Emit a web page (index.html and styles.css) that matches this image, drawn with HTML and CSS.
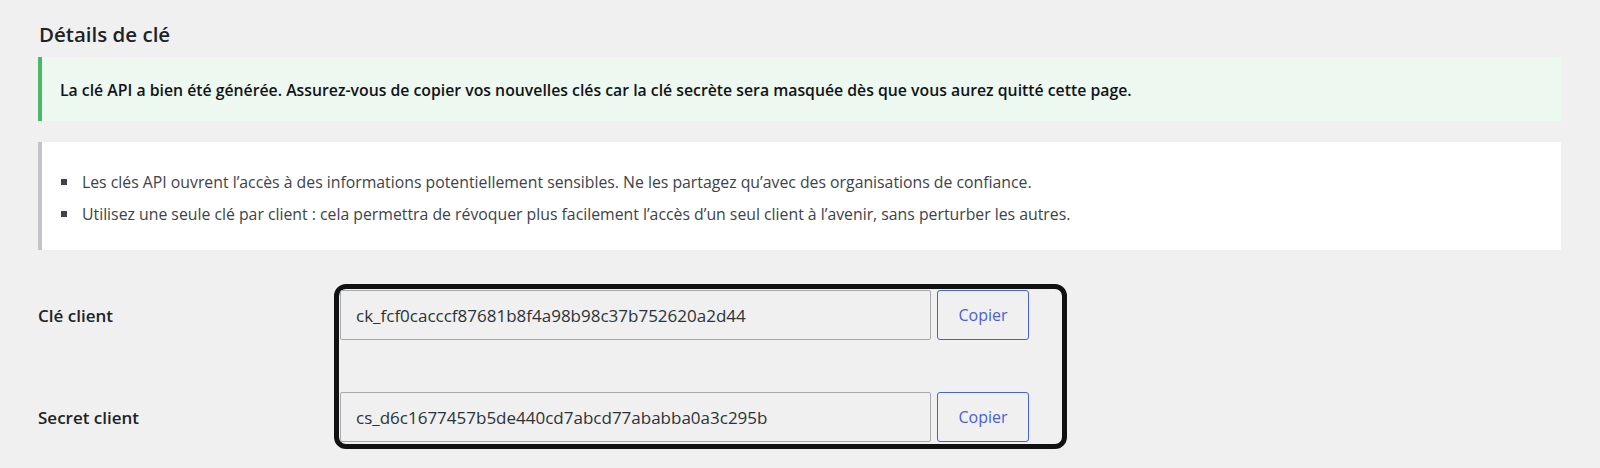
FILE: index.html
```html
<!DOCTYPE html>
<html lang="fr">

<head>
    <meta charset="UTF-8">
    <meta name="viewport" content="width=device-width, initial-scale=1.0">
    <title>Détails de clé</title>
    <link rel="stylesheet" href="styles.css">
</head>

<body>
    <div class="wrap">
        <h2 class="section-title">Détails de clé</h2>

        <div class="notice notice-success">
            <p>La clé API a bien été générée. Assurez-vous de copier vos nouvelles clés car la clé secrète sera masquée dès que vous aurez quitté cette page.</p>
        </div>

        <div class="notice notice-info">
            <ul>
                <li>Les clés API ouvrent l’accès à des informations potentiellement sensibles. Ne les partagez qu’avec des organisations de confiance.</li>
                <li>Utilisez une seule clé par client : cela permettra de révoquer plus facilement l’accès d’un seul client à l’avenir, sans perturber les autres.</li>
            </ul>
        </div>

        <div class="key-form">
            <div class="key-labels">
                <label class="key-label" for="consumer-key">Clé client</label>
                <label class="key-label" for="consumer-secret">Secret client</label>
            </div>
            <div class="key-box">
                <div class="key-row">
                    <input id="consumer-key" class="key-input" type="text" value="ck_fcf0cacccf87681b8f4a98b98c37b752620a2d44" readonly>
                    <button class="copy-button" type="button">Copier</button>
                </div>
                <div class="key-row">
                    <input id="consumer-secret" class="key-input" type="text" value="cs_d6c1677457b5de440cd7abcd77ababba0a3c295b" readonly>
                    <button class="copy-button" type="button">Copier</button>
                </div>
            </div>
        </div>
    </div>
</body>

</html>
```

FILE: styles.css
```css
/* Base */
body {
    margin: 0;
    background-color: #f0f0f1;
    color: #1d2327;
    font-family: 'Open Sans', 'Noto Sans', sans-serif;
}

.wrap {
    padding: 21px 39px 0 38px;
}

.section-title {
    margin: 0 0 10px 1px;
    font-size: 20.5px;
    font-weight: 600;
    line-height: 26px;
}

/* Notices */
.notice {
    background-color: #ffffff;
    border-left: 4px solid #c3c4c7;
}

.notice-success {
    background-color: #edf8f0;
    border-left-color: #4ab866;
    padding: 22px 18px 20px;
    margin-bottom: 21px;
}

.notice-success p {
    margin: 0;
    font-size: 15.8px;
    font-weight: 600;
    line-height: 22px;
    color: #111417;
}

.notice-info {
    padding: 28px 19px 24px;
    margin-bottom: 34px;
}

.notice-info ul {
    margin: 0;
    padding: 0;
    list-style: none;
}

.notice-info li {
    display: flex;
    align-items: center;
    color: #3c434a;
    font-size: 15.8px;
    line-height: 24px;
}

.notice-info li + li {
    margin-top: 8px;
}

.notice-info li::before {
    content: "";
    flex: none;
    width: 6px;
    height: 6px;
    margin-right: 15px;
    background-color: #3c434a;
}

/* Key fields */
.key-form {
    display: flex;
    align-items: flex-start;
}

.key-labels {
    width: 296px;
    padding-top: 6px;
    display: flex;
    flex-direction: column;
    gap: 52px;
}

.key-label {
    height: 50px;
    display: flex;
    align-items: center;
    font-size: 17px;
    font-weight: 600;
}

.key-box {
    display: flex;
    flex-direction: column;
    gap: 52px;
    padding: 1px 33px 2px 1px;
    border: 5px solid #111111;
    border-radius: 12px;
}

.key-row {
    display: flex;
    gap: 6px;
}

.key-input {
    box-sizing: border-box;
    width: 591px;
    height: 50px;
    padding: 0 15px;
    background-color: #f0f0f1;
    border: 1px solid #a7aaad;
    border-radius: 2px;
    color: #2c3338;
    font-family: inherit;
    font-size: 17px;
    outline: none;
}

.copy-button {
    box-sizing: border-box;
    width: 92px;
    height: 50px;
    background-color: #f0f0f1;
    border: 1px solid #4a5ed6;
    border-radius: 3px;
    color: #4a5ed6;
    font-family: inherit;
    font-size: 16px;
    cursor: pointer;
}
```
